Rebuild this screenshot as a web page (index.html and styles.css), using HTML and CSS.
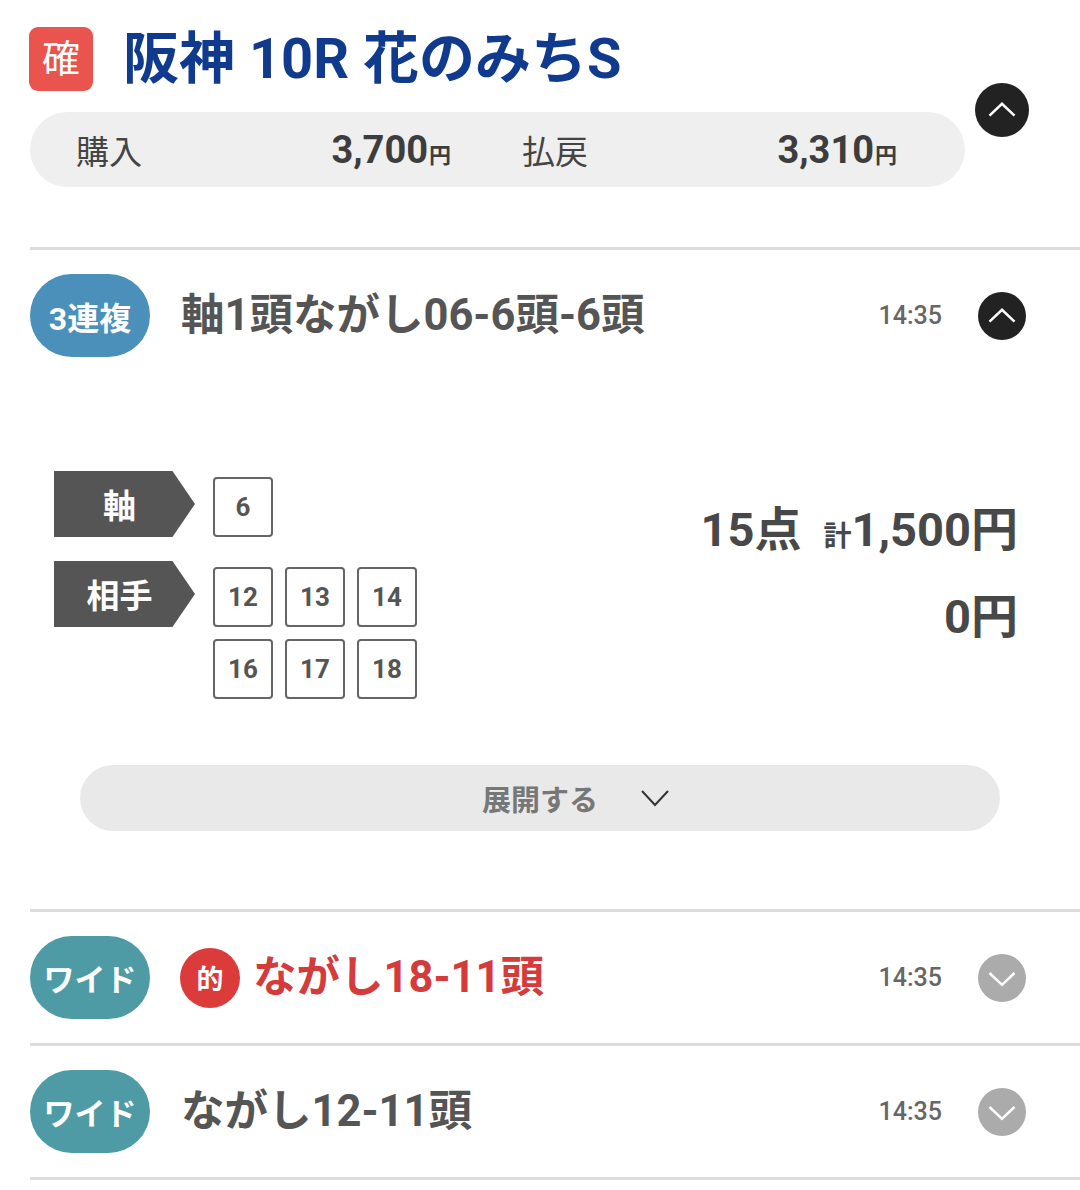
FILE: index.html
```html
<!DOCTYPE html>
<html lang="ja">
<head>
    <meta charset="UTF-8">
    <meta name="viewport" content="width=device-width, initial-scale=1.0">
    <title>阪神 10R 花のみちS</title>
    <link rel="stylesheet" href="styles.css">
</head>
<body>

<div class="page">
    <header class="race-head">
        <div class="race-main">
            <div class="race-title">
                <span class="fixed-badge">確</span>
                <h1>阪神 10R 花のみちS</h1>
            </div>
            <div class="summary">
                <div class="sum-item">
                    <span class="sum-label">購入</span>
                    <span class="sum-value">3,700<small>円</small></span>
                </div>
                <div class="sum-item">
                    <span class="sum-label">払戻</span>
                    <span class="sum-value">3,310<small>円</small></span>
                </div>
            </div>
        </div>
        <button class="toggle toggle-lg" type="button">
            <svg viewBox="0 0 24 24"><polyline points="2,16.5 12,7 22,16.5"/></svg>
        </button>
    </header>

    <ul class="bet-list">
        <li class="bet">
            <div class="bet-row">
                <span class="bet-type type-trio">3連複</span>
                <span class="bet-name">軸1頭ながし06-6頭-6頭</span>
                <span class="bet-time">14:35</span>
                <button class="toggle" type="button">
                    <svg viewBox="0 0 24 24"><polyline points="2,16.5 12,7 22,16.5"/></svg>
                </button>
            </div>
            <div class="bet-detail">
                <div class="detail-body">
                    <div class="picks">
                        <div class="pick-row">
                            <span class="pick-tag">軸</span>
                            <div class="horses">
                                <span class="horse">6</span>
                            </div>
                        </div>
                        <div class="pick-row">
                            <span class="pick-tag">相手</span>
                            <div class="horses">
                                <span class="horse">12</span>
                                <span class="horse">13</span>
                                <span class="horse">14</span>
                                <span class="horse">16</span>
                                <span class="horse">17</span>
                                <span class="horse">18</span>
                            </div>
                        </div>
                    </div>
                    <div class="totals">
                        <div class="total-line">15点<span class="sum-mark">計</span>1,500円</div>
                        <div class="payout-line">0円</div>
                    </div>
                </div>
                <button class="expand" type="button">
                    <span>展開する</span>
                    <svg viewBox="0 0 30 18"><polyline points="2,2 15,16 28,2"/></svg>
                </button>
            </div>
        </li>

        <li class="bet">
            <div class="bet-row">
                <span class="bet-type type-wide">ワイド</span>
                <span class="bet-name hit"><span class="hit-mark">的</span>ながし18-11頭</span>
                <span class="bet-time">14:35</span>
                <button class="toggle toggle-grey" type="button">
                    <svg viewBox="0 0 24 24"><polyline points="2,8 12,17.5 22,8"/></svg>
                </button>
            </div>
        </li>

        <li class="bet">
            <div class="bet-row">
                <span class="bet-type type-wide">ワイド</span>
                <span class="bet-name">ながし12-11頭</span>
                <span class="bet-time">14:35</span>
                <button class="toggle toggle-grey" type="button">
                    <svg viewBox="0 0 24 24"><polyline points="2,8 12,17.5 22,8"/></svg>
                </button>
            </div>
        </li>
    </ul>
</div>

</body>
</html>
```

FILE: styles.css
```css
/* Base */
* {
    box-sizing: border-box;
    margin: 0;
    padding: 0;
}
body {
    font-family: Roboto, "Noto Sans CJK JP", sans-serif;
    background-color: #ffffff;
    color: #555;
}
ul {
    list-style: none;
}
button {
    border: none;
    background: none;
    font-family: inherit;
    cursor: pointer;
}

.page {
    padding: 27px 0 0 30px;
}

/* Race header */
.race-head {
    display: flex;
    align-items: center;
    padding-right: 51px;
}
.race-main {
    flex: 1;
}
.race-title {
    display: flex;
    align-items: center;
    gap: 30px;
}
.fixed-badge {
    width: 64px;
    height: 64px;
    margin-left: -1px;
    border-radius: 9px;
    background-color: #e9544f;
    color: #fff;
    font-size: 38px;
    line-height: 64px;
    text-align: center;
}
.race-title h1 {
    font-size: 56px;
    line-height: 64px;
    font-weight: 700;
    color: #0f3a8e;
}

.summary {
    display: flex;
    gap: 71px;
    height: 75px;
    margin-top: 21px;
    padding: 0 68px 0 46px;
    background-color: #efefef;
    border-radius: 38px;
}
.sum-item {
    flex: 1;
    display: flex;
    align-items: center;
    justify-content: space-between;
}
.sum-label {
    font-size: 33px;
    color: #444;
}
.sum-value {
    font-size: 38px;
    font-weight: 700;
    color: #3d3d3d;
}
.sum-value small {
    font-size: 22px;
    margin-left: 1px;
}

/* Toggle buttons */
.toggle {
    flex: none;
    width: 48px;
    height: 48px;
    border-radius: 50%;
    background-color: #222;
    display: flex;
    align-items: center;
    justify-content: center;
}
.toggle svg {
    width: 30px;
    height: 30px;
    fill: none;
    stroke: #fff;
    stroke-width: 2;
}
.toggle-lg {
    width: 54px;
    height: 54px;
    margin-left: 10px;
    margin-top: 5px;
}
.toggle-grey {
    background-color: #ababab;
}

/* Bet list */
.bet-list {
    margin-top: 60px;
    border-bottom: 3px solid #dcdcdc;
}
.bet {
    border-top: 3px solid #dcdcdc;
}
.bet-row {
    display: flex;
    align-items: center;
    padding: 24px 54px 24px 0;
}
.bet-type {
    flex: none;
    width: 120px;
    height: 83px;
    border-radius: 42px;
    display: flex;
    align-items: center;
    justify-content: center;
    color: #fff;
    font-weight: 700;
    font-size: 32px;
}
.type-trio {
    background-color: #4a90ba;
}
.type-wide {
    background-color: #4f9ba5;
    font-size: 31px;
}
.bet-name {
    flex: 1;
    display: flex;
    align-items: center;
    margin-left: 31px;
    padding-bottom: 8px;
    font-size: 43.5px;
    font-weight: 700;
    color: #555;
}
.bet-name.hit {
    color: #d43b3b;
}
.hit-mark {
    width: 60px;
    height: 60px;
    margin: 8px 13px 0 -1px;
    border-radius: 50%;
    background-color: #dc3b3b;
    color: #fff;
    font-size: 27px;
    display: flex;
    align-items: center;
    justify-content: center;
}
.bet-time {
    font-size: 25px;
    font-weight: 500;
    color: #666;
    margin-right: 36px;
}

/* Open detail */
.bet-detail {
    padding: 90px 0 78px;
}
.detail-body {
    display: flex;
    padding: 0 62px 0 24px;
}
.picks {
    display: flex;
    flex-direction: column;
    gap: 24px;
}
.pick-row {
    display: flex;
    align-items: flex-start;
    gap: 18px;
}
.pick-tag {
    flex: none;
    width: 141px;
    height: 66px;
    padding-right: 10px;
    background-color: #555;
    clip-path: polygon(0 0, 84% 0, 100% 50%, 84% 100%, 0 100%);
    color: #fff;
    font-size: 33px;
    font-weight: 700;
    display: flex;
    align-items: center;
    justify-content: center;
}
.horses {
    display: grid;
    grid-template-columns: repeat(3, 60px);
    gap: 12px;
    margin-top: 6px;
}
.horse {
    width: 60px;
    height: 60px;
    border: 2px solid #666;
    border-radius: 4px;
    display: flex;
    align-items: center;
    justify-content: center;
    font-size: 26px;
    font-weight: 700;
    color: #555;
}

.totals {
    flex: 1;
    text-align: right;
    font-weight: 700;
    color: #484848;
    font-size: 47px;
    line-height: 58px;
}
.total-line {
    margin-top: 30px;
}
.sum-mark {
    font-size: 28px;
    margin-left: 22px;
}
.payout-line {
    margin-top: 22px;
}

.expand {
    display: flex;
    align-items: center;
    justify-content: center;
    gap: 42px;
    width: 920px;
    height: 66px;
    margin: 66px 0 0 50px;
    padding-left: 72px;
    border-radius: 33px;
    background-color: #e9e9e9;
    color: #777;
    font-size: 29px;
    font-weight: 700;
}
.expand svg {
    width: 30px;
    height: 18px;
    fill: none;
    stroke: #333;
    stroke-width: 2;
}
```
